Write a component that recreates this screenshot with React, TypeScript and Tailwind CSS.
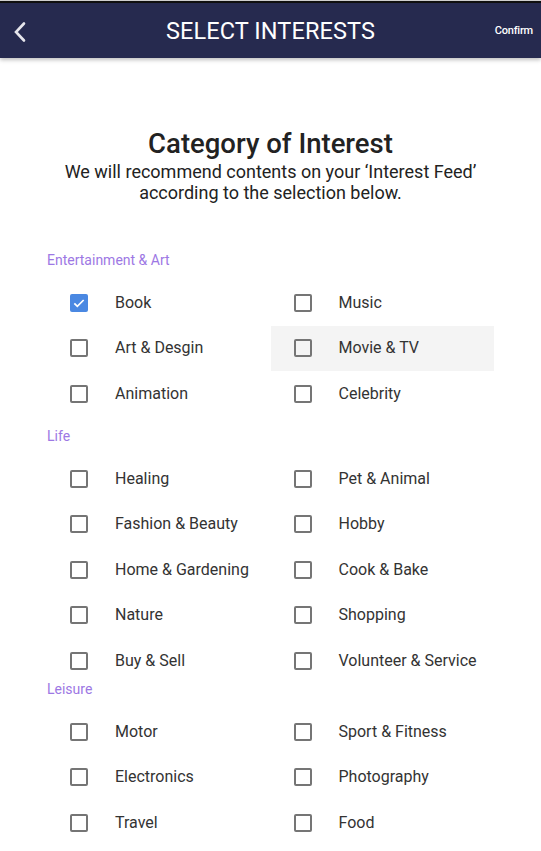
import { useState } from "react";

type Section = { title: string; labelClass: string; items: string[][] };

const SECTIONS: Section[] = [
  {
    title: "Entertainment & Art",
    labelClass: "mt-[49px]",
    items: [
      ["Book", "Music"],
      ["Art & Desgin", "Movie & TV"],
      ["Animation", "Celebrity"],
    ],
  },
  {
    title: "Life",
    labelClass: "mt-[11.5px]",
    items: [
      ["Healing", "Pet & Animal"],
      ["Fashion & Beauty", "Hobby"],
      ["Home & Gardening", "Cook & Bake"],
      ["Nature", "Shopping"],
      ["Buy & Sell", "Volunteer & Service"],
    ],
  },
  {
    title: "Leisure",
    labelClass: "mt-[-2.5px]",
    items: [
      ["Motor", "Sport & Fitness"],
      ["Electronics", "Photography"],
      ["Travel", "Food"],
    ],
  },
];

const Checkbox = ({ checked }: { checked: boolean }) =>
  checked ? (
    <span className="flex h-[18px] w-[18px] items-center justify-center rounded-[2px] bg-[#4a88e2]">
      <svg viewBox="0 0 24 24" className="h-[16px] w-[16px]" fill="none">
        <path d="M5 12.5l4.5 4.5L19 7.5" stroke="white" strokeWidth="2.6" />
      </svg>
    </span>
  ) : (
    <span className="block h-[18px] w-[18px] rounded-[2px] border-2 border-[#757575]" />
  );

const App = () => {
  const [selected, setSelected] = useState<string[]>(["Book"]);
  const toggle = (name: string) =>
    setSelected((s) => (s.includes(name) ? s.filter((x) => x !== name) : [...s, name]));

  return (
    <div
      className="relative h-[851px] w-[541px] overflow-hidden bg-white text-[#222]"
      style={{ fontFamily: "Roboto, 'Liberation Sans', sans-serif" }}
    >
      {/* top strip */}
      <div className="h-px bg-[#cfcfcf]" />
      <div className="h-[2px] bg-[#111]" />

      {/* Header */}
      <header className="relative flex h-[55px] items-center justify-center bg-[#262a4f] shadow-[0_2px_4px_rgba(0,0,0,0.25)]">
        <svg viewBox="0 0 14 22" className="absolute left-[13px] top-[18px] h-[22px] w-[14px]" fill="none">
          <path d="M11 2.5L3 11l8 8.5" stroke="#e6e6ec" strokeWidth="2.6" strokeLinecap="round" />
        </svg>
        <h1 className="pt-[2px] text-[23.5px] tracking-[0.1px] text-white">SELECT INTERESTS</h1>
        <button className="absolute right-[8px] top-[20px] text-[11px] font-medium tracking-[-0.2px] text-white">
          Confirm
        </button>
      </header>

      {/* Intro */}
      <div className="mt-[71px] flex flex-col items-center text-center">
        <h2 className="text-[27.5px] font-medium leading-[30px] text-[#222]">Category of Interest</h2>
        <p className="mt-[2px] text-[18px] leading-[21px] text-[#222]">
          We will recommend contents on your ‘Interest Feed’
          <br />
          according to the selection below.
        </p>
      </div>

      {/* Sections */}
      <div className="px-[47px]">
        {SECTIONS.map((sec) => (
          <section key={sec.title}>
            <div className={`${sec.labelClass} text-[14px] leading-4 text-[#9d78e4]`}>{sec.title}</div>
            <div className="mt-[12px] grid grid-cols-2 w-[447px]">
              {sec.items.flat().map((name) => (
                <label
                  key={name}
                  onClick={() => toggle(name)}
                  className={`flex h-[45.5px] cursor-pointer items-center gap-[27px] pl-[23px] text-[16px] text-[#333] ${
                    name === "Movie & TV" ? "bg-[#f4f4f4]" : ""
                  }`}
                >
                  <Checkbox checked={selected.includes(name)} />
                  <span>{name}</span>
                </label>
              ))}
            </div>
          </section>
        ))}
      </div>
    </div>
  );
};

export default App;
